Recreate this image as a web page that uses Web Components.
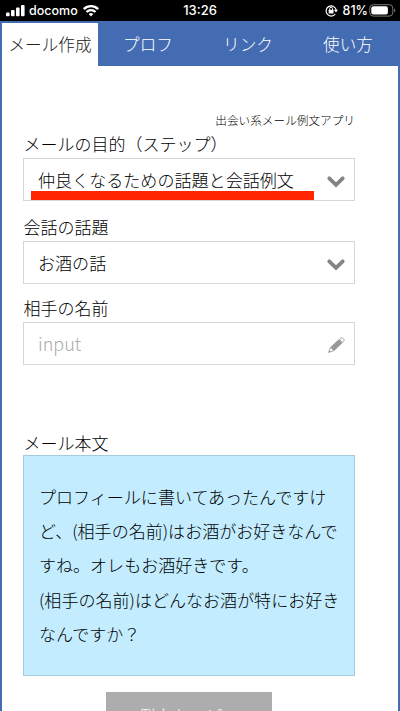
<!DOCTYPE html>
<html lang="ja">
<head>
<meta charset="utf-8">
<meta name="viewport" content="width=device-width, initial-scale=1">
<title>出会い系メール例文アプリ</title>
<style>
  body {
    margin: 0;
    height: 711px;
    overflow: hidden;
    background: #fff;
    color: #000;
    font: 300 17px/24px "Noto Sans CJK JP", sans-serif;
  }
</style>
</head>
<body>
<mail-app></mail-app>

<script>
class StatusBar extends HTMLElement {
  connectedCallback() {
    this.attachShadow({ mode: 'open' });
    this.shadowRoot.innerHTML = `
      <style>
        :host {
          display: grid;
          grid-template-columns: 1fr auto 1fr;
          align-items: center;
          height: 21px;
          background: #000;
          color: #fff;
          font: 500 13px/21px Inter, "Liberation Sans", sans-serif;
        }
        .side { display: flex; align-items: center; }
        .right { justify-content: flex-end; }
        svg { display: block; flex: none; }
        .carrier { margin: 0 5px 0 4px; font-size: 12.5px; }
        .lock { margin-right: 5px; }
        .percent { font-size: 12.5px; }
        .battery { margin: 0 4px 0 1px; }
      </style>
      <div class="side">
        <svg width="25" height="21" fill="#fff">
          <rect x="6" y="12.5" width="3.6" height="3.7" rx="1"/>
          <rect x="11" y="10" width="3.6" height="6.2" rx="1"/>
          <rect x="16" y="7.5" width="3.6" height="8.7" rx="1"/>
          <rect x="21" y="5" width="3.6" height="11.2" rx="1"/>
        </svg>
        <span class="carrier">docomo</span>
        <svg width="16" height="21" viewBox="0 0 16 21" fill="none" stroke="#fff" stroke-width="2.3">
          <path d="M.8 9.1a10.2 10.2 0 0 1 14.4 0"/>
          <path d="M3.5 12a6.3 6.3 0 0 1 9 0"/>
          <path d="M8 16.4 5.7 14a3.3 3.3 0 0 1 4.6 0z" fill="#fff" stroke="none"/>
        </svg>
      </div>
      <span>13:26</span>
      <div class="side right">
        <svg class="lock" width="13" height="21" viewBox="0 0 13 21" fill="none" stroke="#fff" stroke-width="1.2">
          <path d="M10.3 14A5.1 5.1 0 1 1 11.2 10"/>
          <path d="M8.8 9.7h4.2l-2 2.8z" fill="#fff" stroke="none"/>
          <rect x="3.7" y="9.8" width="4.8" height="3.7" rx=".5" fill="#fff" stroke="none"/>
          <path d="M4.7 10V8.7a1.4 1.4 0 0 1 2.8 0V10" stroke-width="1"/>
        </svg>
        <span class="percent">81%</span>
        <svg class="battery" width="27" height="21" viewBox="0 0 27 21">
          <rect x=".8" y="4.7" width="23" height="11.4" rx="3.4" fill="none" stroke="#777"/>
          <rect x="2.3" y="6.2" width="16.6" height="8.4" rx="2" fill="#fff"/>
          <path d="M25.1 8.4c1.7.7 1.7 3.3 0 4z" fill="#777"/>
        </svg>
      </div>
    `;
  }
}
customElements.define('status-bar', StatusBar);

class TabBar extends HTMLElement {
  connectedCallback() {
    this.attachShadow({ mode: 'open' });
    this.shadowRoot.innerHTML = `
      <style>
        :host {
          display: flex;
          box-sizing: border-box;
          height: 45px;
          padding: 2px 2px 0 2px;
          background: #446cb3;
        }
      </style>
      <slot></slot>
    `;
  }
}
customElements.define('tab-bar', TabBar);

class TabItem extends HTMLElement {
  connectedCallback() {
    this.attachShadow({ mode: 'open' });
    this.shadowRoot.innerHTML = `
      <style>
        :host {
          display: block;
          flex: 1 1 0;
          color: #fff;
          font-size: 16.6px;
          line-height: 42px;
          text-align: center;
          white-space: nowrap;
        }
        :host([active]) {
          flex: 0 0 96px;
          background: #fff;
          color: #222;
        }
      </style>
      <slot></slot>
    `;
  }
}
customElements.define('tab-item', TabItem);

// Labelled row: a text box with an icon on the right
class FormField extends HTMLElement {
  connectedCallback() {
    const icons = {
      chevron: '<path d="M2.3 6.3 9 12.8 15.7 6.3" fill="none" stroke="#848484" stroke-width="3.7" stroke-linecap="round"/>',
      pencil: `<g transform="translate(1.6 16.4) rotate(-43)">
        <path d="M0 0 5-2.3V2.3z" fill="#fff" stroke="#999" stroke-width=".8"/>
        <path d="M0 0 2-1V1z" fill="#999"/>
        <path d="M5-2.6H16.4V2.6H5z" fill="#999"/>
        <path d="M17-2.2h1.4q1.6 0 1.6 1.4V.8q0 1.4-1.6 1.4H17z" fill="#fff" stroke="#999" stroke-width=".9"/>
      </g>`
    };
    this.attachShadow({ mode: 'open' });
    this.shadowRoot.innerHTML = `
      <style>
        :host { display: block; }
        .label { height: 26px; line-height: 24px; padding-left: 0.5px; }
        .box {
          position: relative;
          display: flex;
          align-items: center;
          justify-content: space-between;
          box-sizing: border-box;
          height: 43px;
          padding: 0 9px 0 14px;
          border: 1px solid #d6d6d6;
        }
        .value { font-size: 17.07px; }
        .placeholder { margin-bottom: 2px; color: #aaa; font-size: 18px; }
        svg { display: block; margin-top: 3px; }
        /* red marker drawn across the lower edge of the box */
        .marker {
          position: absolute;
          left: 7px;
          bottom: 0;
          width: 283px;
          height: 9px;
          background: #ff2600;
        }
      </style>
      <div class="label">${this.getAttribute('label')}</div>
      <div class="box">
        <span class="${this.hasAttribute('placeholder') ? 'placeholder' : 'value'}"><slot></slot></span>
        <svg width="18" height="18" viewBox="0 0 18 18">${icons[this.getAttribute('icon')]}</svg>
        ${this.hasAttribute('marked') ? '<div class="marker"></div>' : ''}
      </div>
    `;
  }
}
customElements.define('form-field', FormField);

class MailBody extends HTMLElement {
  connectedCallback() {
    this.attachShadow({ mode: 'open' });
    this.shadowRoot.innerHTML = `
      <style>
        :host { display: block; }
        .label { height: 24px; padding-left: 0.5px; }
        .text {
          box-sizing: border-box;
          height: 221px;
          padding: 24px 0 0 15px;
          border: 1px solid #a5cbdc;
          background: #c3edff;
          line-height: 34.2px;
          font-size: 17.05px;
          white-space: nowrap;
        }
      </style>
      <div class="label">メール本文</div>
      <div class="text"><slot></slot></div>
    `;
  }
}
customElements.define('mail-body', MailBody);

class CopyButton extends HTMLElement {
  connectedCallback() {
    this.attachShadow({ mode: 'open' });
    this.shadowRoot.innerHTML = `
      <style>
        :host { display: flex; justify-content: center; }
        button {
          width: 166px;
          height: 48px;
          padding: 0;
          border: 0;
          background: #adadad;
          color: #fff;
          font: inherit;
        }
      </style>
      <button><slot></slot></button>
    `;
  }
}
customElements.define('copy-button', CopyButton);

class MailApp extends HTMLElement {
  connectedCallback() {
    this.attachShadow({ mode: 'open' });
    this.shadowRoot.innerHTML = `
      <style>
        :host { display: block; height: 711px; overflow: hidden; }
        main {
          box-sizing: border-box;
          height: 645px;
          padding: 44px 43px 0 21px;
          border: solid #446cb3;
          border-width: 0 2px;
          overflow: hidden;
        }
        .app-name { height: 22px; font-size: 11.65px; line-height: 20px; text-align: right; }
        form-field { margin-bottom: 14px; }
        form-field.second { margin-bottom: 12px; }
        mail-body { margin-top: 66px; }
        copy-button { margin-top: 16px; }
      </style>
      <status-bar></status-bar>
      <tab-bar>
        <tab-item active>メール作成</tab-item>
        <tab-item>プロフ</tab-item>
        <tab-item>リンク</tab-item>
        <tab-item>使い方</tab-item>
      </tab-bar>
      <main>
        <div class="app-name">出会い系メール例文アプリ</div>
        <form-field label="メールの目的（ステップ）" icon="chevron" marked>仲良くなるための話題と会話例文</form-field>
        <form-field class="second" label="会話の話題" icon="chevron">お酒の話</form-field>
        <form-field label="相手の名前" icon="pencil" placeholder>input</form-field>
        <mail-body>プロフィールに書いてあったんですけ<br>ど、(相手の名前)はお酒がお好きなんで<br>すね。オレもお酒好きです。<br>(相手の名前)はどんなお酒が特にお好き<br>なんですか？</mail-body>
        <copy-button>例文をコピー</copy-button>
      </main>
    `;
  }
}
customElements.define('mail-app', MailApp);
</script>
</body>
</html>
